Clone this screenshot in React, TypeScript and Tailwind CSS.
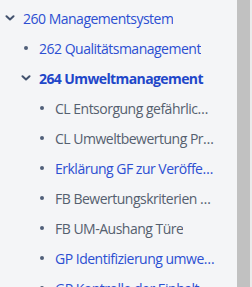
import React from 'react';

type Item = { label: string; level: number; kind: 'open' | 'leaf'; tone: 'link' | 'muted'; bold?: boolean };

const items: Item[] = [
  { label: '260 Managementsystem', level: 0, kind: 'open', tone: 'link' },
  { label: '262 Qualitätsmanagement', level: 1, kind: 'leaf', tone: 'link' },
  { label: '264 Umweltmanagement', level: 1, kind: 'open', tone: 'link', bold: true },
  { label: 'CL Entsorgung gefährlicher Abfälle', level: 2, kind: 'leaf', tone: 'muted' },
  { label: 'CL Umweltbewertung Prozesse', level: 2, kind: 'leaf', tone: 'muted' },
  { label: 'Erklärung GF zur Veröffentlichung', level: 2, kind: 'leaf', tone: 'link' },
  { label: 'FB Bewertungskriterien Umweltaspekte', level: 2, kind: 'leaf', tone: 'muted' },
  { label: 'FB UM-Aushang Türe', level: 2, kind: 'leaf', tone: 'muted' },
  { label: 'GP Identifizierung umweltrelevanter Aspekte', level: 2, kind: 'leaf', tone: 'link' },
  { label: 'GP Kontrolle der Einhaltung', level: 2, kind: 'leaf', tone: 'link' },
];

function Chevron() {
  return (
    <svg width="10" height="6" viewBox="0 0 10 6" fill="none">
      <path d="M1.5 1.2 L5 4.5 L8.5 1.2" stroke="#42526e" strokeWidth="2" strokeLinecap="round" strokeLinejoin="round" />
    </svg>
  );
}

const indent = ['pl-[2px]', 'pl-[18px]', 'pl-[34px]'];

export default function App() {
  return (
    <div className="flex h-[287px] w-[252px] overflow-hidden bg-[#f4f5f7] font-['Open_Sans',sans-serif] text-[14px] tracking-[-0.5px]">
      <ul className="flex-1 min-w-0 pt-[3px] pr-[21px]">
        {items.map((it) => (
          <li key={it.label} className={`flex h-[30px] items-center ${indent[it.level]}`}>
            <span className="flex w-[16px] shrink-0 items-center justify-center">
              {it.kind === 'open' ? <Chevron /> : <span className="h-[4px] w-[4px] rounded-full bg-[#505f79]" />}
            </span>
            <span
              className={`ml-[5px] ${it.bold ? 'whitespace-nowrap font-bold text-[#1f47c9] tracking-[-0.6px]' : 'truncate'} ${it.tone === 'link' && !it.bold ? 'text-[#2c4fd2]' : ''} ${it.tone === 'muted' ? 'text-[#55606f]' : ''}`}
            >
              {it.label}
            </span>
          </li>
        ))}
      </ul>
      <div className="w-[13px] shrink-0 bg-[#c1c1c1]" />
      <div className="w-[2px] shrink-0 bg-[#ebebeb]" />
    </div>
  );
}
